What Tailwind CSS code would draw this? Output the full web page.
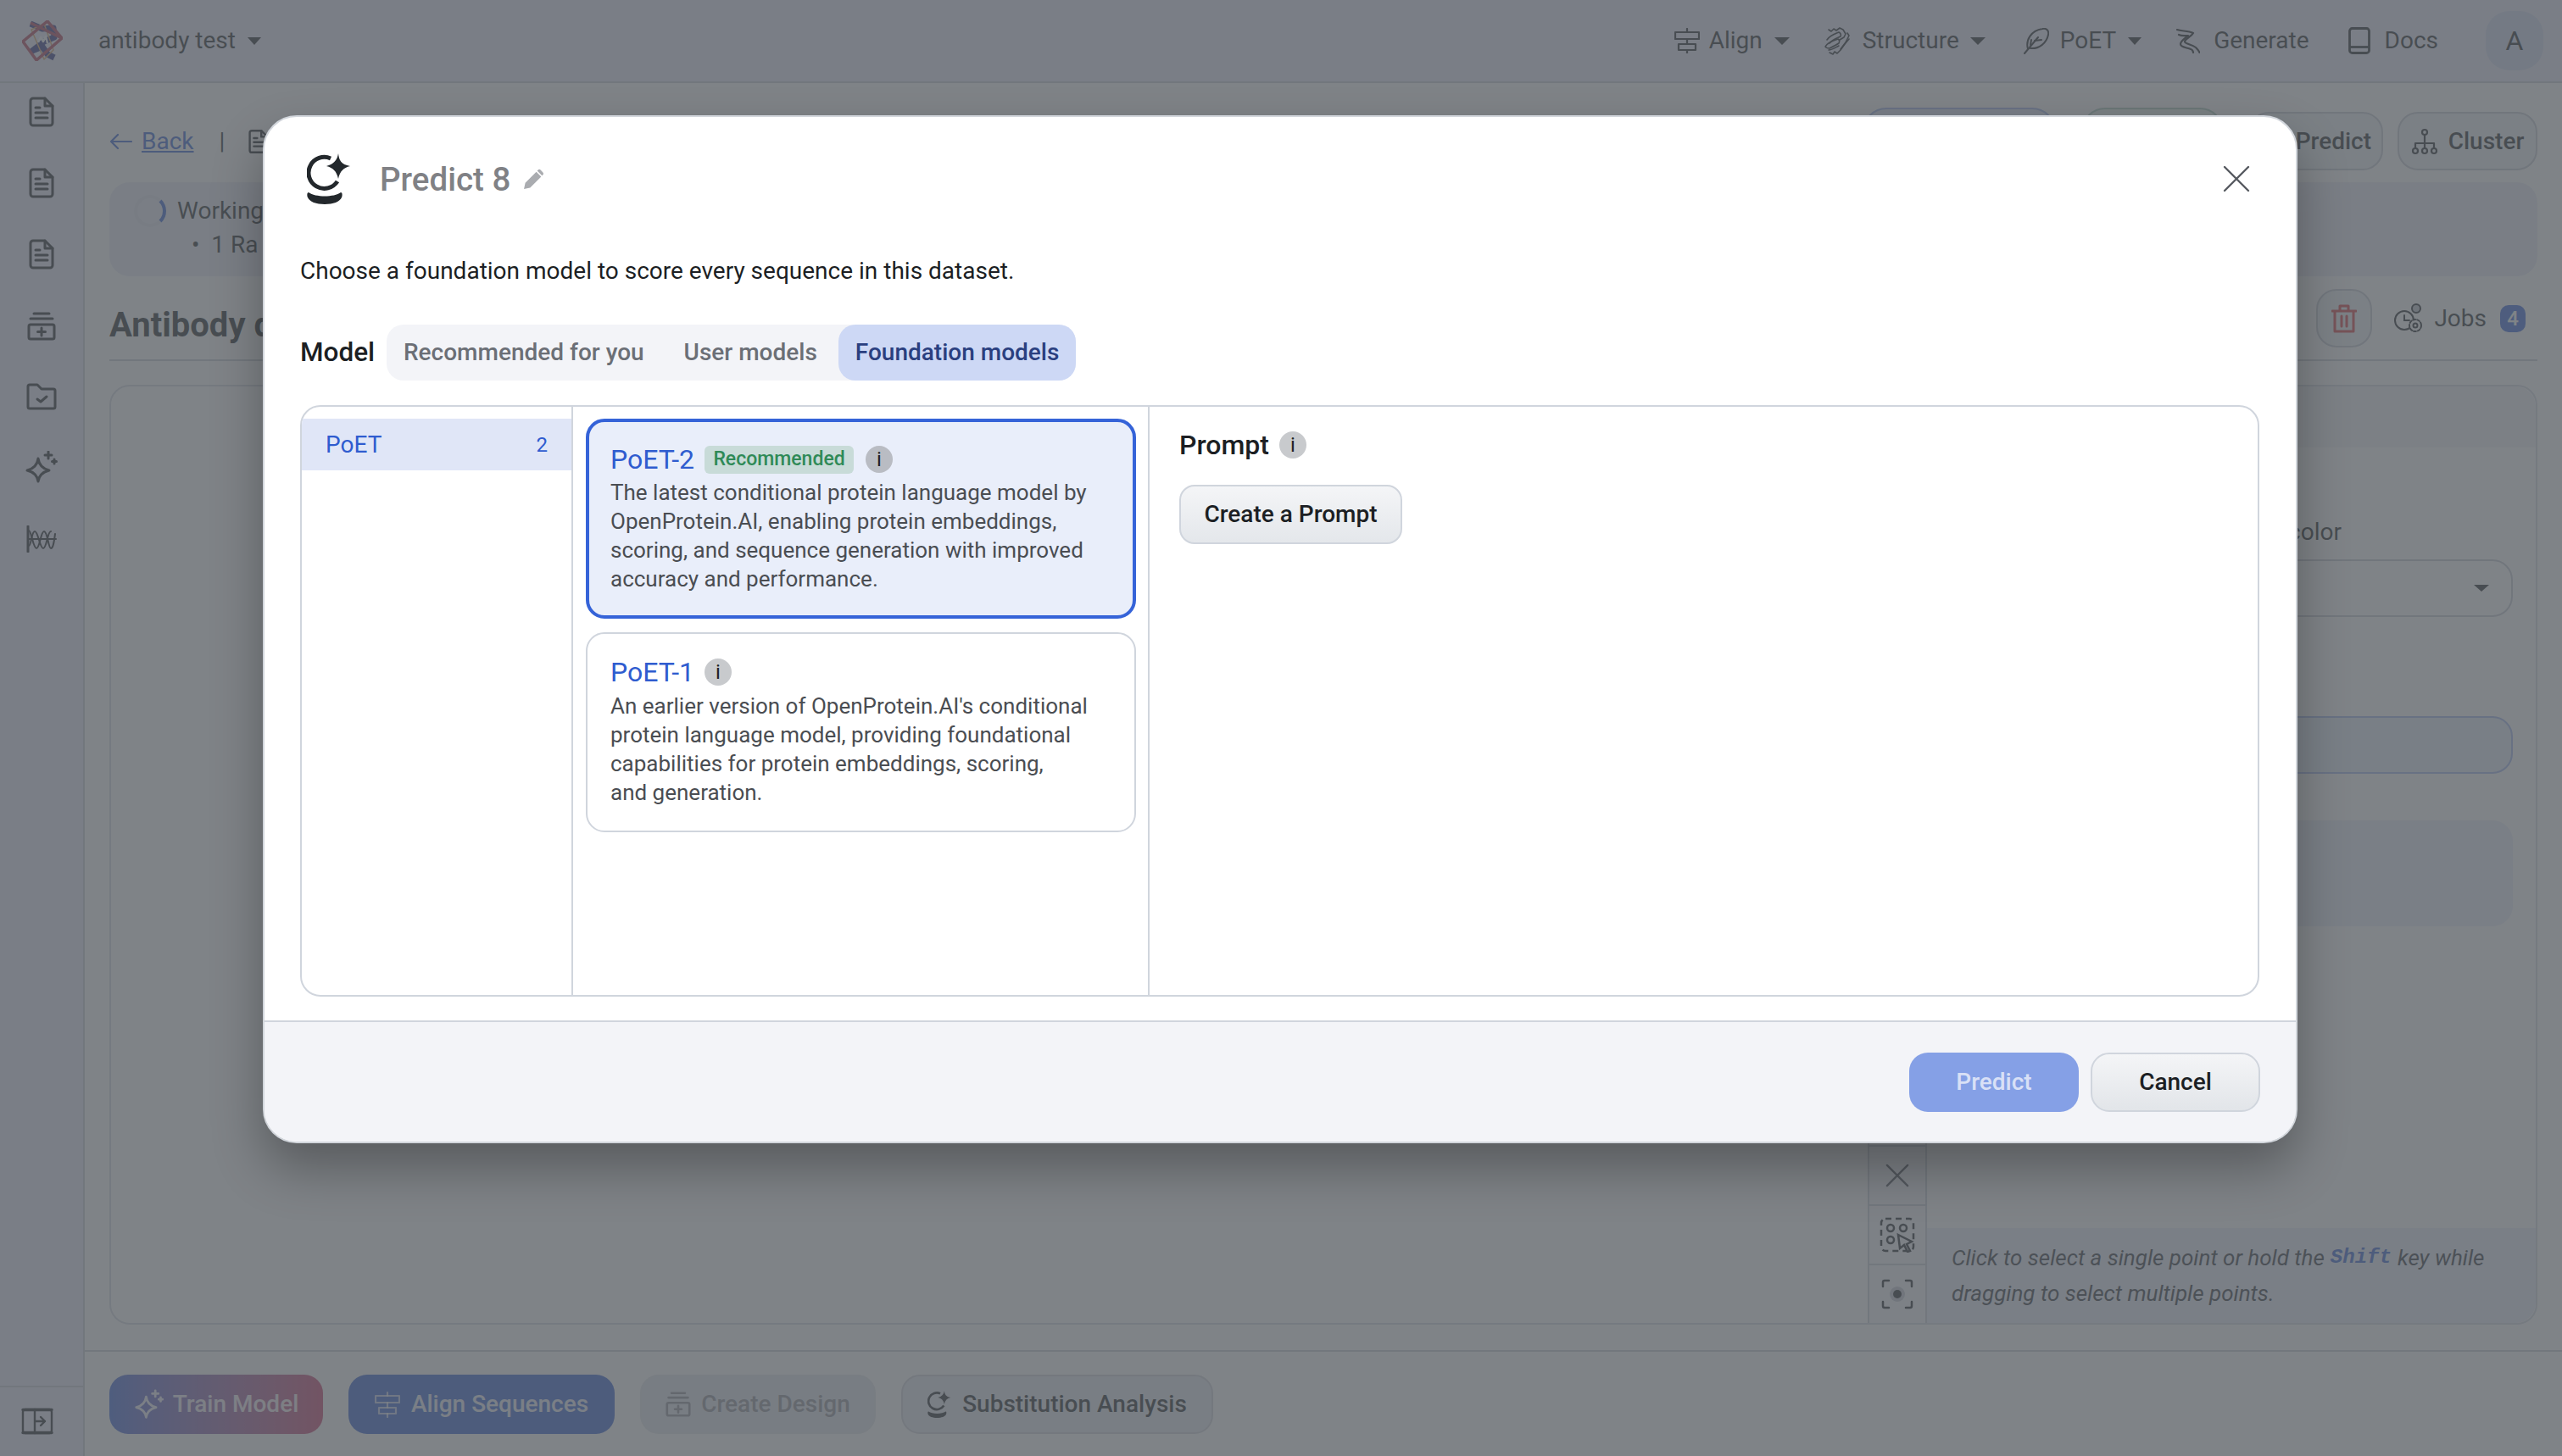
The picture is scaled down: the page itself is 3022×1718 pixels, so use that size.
<!DOCTYPE html>
<html lang="en">
<head>
  <meta charset="UTF-8" />
  <title>Predict 8</title>
  <script src="https://cdn.jsdelivr.net/npm/@tailwindcss/browser@4"></script>
</head>
<body class="relative h-[1718px] w-[3022px] overflow-hidden bg-white font-[Roboto,sans-serif] text-[#1c1f24]">
  <svg class="hidden">
    <symbol id="doc" viewBox="0 0 30 36" fill="none" stroke="currentColor" stroke-width="3" stroke-linejoin="round" stroke-linecap="round">
      <path d="M5 2h14l9 9v20a3 3 0 0 1-3 3H5a3 3 0 0 1-3-3V5a3 3 0 0 1 3-3z"/><path d="M19 2v9h9"/><path d="M8 13h5M8 19h14M8 25h14"/>
    </symbol>
    <symbol id="ball" viewBox="0 0 52 60">
      <path d="M28 6A18.500 18.500 0 1 0 36 33" fill="none" stroke="currentColor" stroke-width="5"/>
      <path d="M37 0c1 8 3 13 14 15-8 2-12 6-14 15-2-9-6-13-14-15 8-2 13-7 14-15z" fill="currentColor"/>
      <path d="M2 46c8 6 30 6 38 0 2 0 2 4 1 6-2 5-10 8-20 8S3 57 1 52c-1-2-1-6 1-6z" fill="currentColor"/>
    </symbol>
    <symbol id="alignv" viewBox="0 0 30 30" fill="none" stroke="currentColor" stroke-width="2.200" stroke-linejoin="round" stroke-linecap="round">
      <path d="M15 1v4M15 13v6M15 26v4"/><rect x="1" y="5" width="28" height="8"/><rect x="5" y="19" width="20" height="7"/>
    </symbol>
    <symbol id="sparkle" viewBox="0 0 40 38" fill="none" stroke="currentColor" stroke-width="3" stroke-linejoin="round" stroke-linecap="round">
      <path d="M16 9c1 8 5 12 13 14-8 2-12 6-13 13-1-7-5-11-13-13 8-2 12-6 13-14z"/><path d="M28 1v8M24 5h8M35 10v5M32.500 12.500h5"/>
    </symbol>
    <symbol id="box" viewBox="0 0 34 34" fill="none" stroke="currentColor" stroke-width="3" stroke-linejoin="round" stroke-linecap="round">
      <path d="M8 2h18M4 8h26"/><rect x="2" y="15" width="30" height="17" rx="2"/><path d="M17 19v9M12.500 23.500h9"/>
    </symbol>
  </svg>

  <!-- page behind the dialog -->
  <header class="flex h-[98px] items-center border-b-2 border-[#c8ccd6] bg-[#e9e9fa] pl-[26px] pr-[22px] text-[28px]">
    <svg class="w-[48px] h-[48px]" viewBox="0 0 48 48" fill="none" stroke-linejoin="round">
      <path d="M10 4 24 10 37 9 38 20 26 25 12 36 24 31 30 40 38 44" stroke="#2a3080" stroke-width="7"/>
      <path d="M19 26l3-6 3 5 3-6 2 8" stroke="#fff" stroke-width="2.500"/>
      <path d="M11 11 26 4 37 35 26 46z" stroke="#d8a060" stroke-width="1.500"/>
      <path d="M30 1 47 21 17 47 1 25zM10 3 47 21M1 25 30 1" stroke="#b03a55" stroke-width="3.500"/>
    </svg>
    <span class="ml-[42px]">antibody test</span>
    <span class="ml-[14px] h-0 w-0 border-x-[8px] border-t-[9px] border-x-transparent border-t-[#1c1f24]"></span>
    <nav class="ml-auto flex items-center">
      <svg class="w-[30px] h-[30px]"><use href="#alignv"/></svg>
      <span class="ml-[11px]">Align</span>
      <span class="ml-[14px] h-0 w-0 border-x-[9px] border-t-[9px] border-x-transparent border-t-[#1c1f24]"></span>
      <svg class="ml-[41px] w-[32px] h-[33px]" viewBox="0 0 32 33" fill="none" stroke="currentColor" stroke-width="1.600" stroke-linejoin="round" stroke-linecap="round">
        <path d="M5 3l3 2 3-3 3 2 4-3 4 2 3 5-2 4-5 3"/><path d="M3 15c3-5 9-7 14-9 2 1 3 3 2 5-4 2-10 4-13 8"/><path d="M1 23c2-4 9-7 15-9 2 1 2 3 1 5-3 2-7 4-11 6-2 0-4 0-5-2z"/><path d="M5 27c4 0 8-3 12-5M6 30l4 2 2-3 3 2 4-4 5-7 5-6"/><path d="M27 7l2 3-4 8-6 8"/>
      </svg>
      <span class="ml-[13px]">Structure</span>
      <span class="ml-[13px] h-0 w-0 border-x-[9px] border-t-[9px] border-x-transparent border-t-[#1c1f24]"></span>
      <svg class="ml-[45px] w-[30px] h-[31px]" viewBox="0 0 30 31" fill="none" stroke="currentColor" stroke-width="2" stroke-linejoin="round" stroke-linecap="round">
        <path d="M1 30 17 11"/><path d="M5 25C2 14 9 3 22 1c5-1 8 2 7 7-2 10-11 17-21 16"/><path d="M8 20l1-6M13 15l8-1"/>
      </svg>
      <span class="ml-[13px]">PoET</span>
      <span class="ml-[14px] h-0 w-0 border-x-[8px] border-t-[9px] border-x-transparent border-t-[#1c1f24]"></span>
      <svg class="ml-[41px] w-[28px] h-[29px]" viewBox="0 0 28 29" fill="none" stroke="currentColor" stroke-width="2.200" stroke-linejoin="round" stroke-linecap="round">
        <path d="M1 1c5 2 13 1 19 4-2 4-9 6-10 10 0 3 8 3 13 7 2 2 4 4 5 7"/><path d="M3 7c4 2 9 1 11 1-3 3-9 6-9 10 0 4 8 4 12 6 1 0 3 2 3 4"/>
      </svg>
      <span class="ml-[16px]">Generate</span>
      <svg class="ml-[46px] w-[26px] h-[32px]" viewBox="0 0 26 32" fill="none" stroke="currentColor" stroke-width="2.800" stroke-linejoin="round">
        <rect x="1.500" y="1.500" width="23" height="29" rx="3"/><path d="M1.500 23.500h23"/>
      </svg>
      <span class="ml-[17px]">Docs</span>
      <span class="ml-[56px] flex h-[70px] w-[68px] items-center justify-center rounded-[28px] bg-[#d0d8f0] text-[32px]">A</span>
    </nav>
  </header>

  <div class="flex h-[1620px]">
    <aside class="flex w-[100px] shrink-0 flex-col items-center border-r-2 border-[#c8ccd6] bg-[#e9e9fa]">
      <svg class="mt-[16px] w-[30px] h-[36px]"><use href="#doc"/></svg>
      <svg class="mt-[48px] w-[30px] h-[36px]"><use href="#doc"/></svg>
      <svg class="mt-[48px] w-[30px] h-[36px]"><use href="#doc"/></svg>
      <svg class="mt-[50px] w-[34px] h-[34px]"><use href="#box"/></svg>
      <svg class="mt-[50px] w-[36px] h-[32px]" viewBox="0 0 36 32" fill="none" stroke="currentColor" stroke-width="3" stroke-linejoin="round" stroke-linecap="round">
        <path d="M2 4a2 2 0 0 1 2-2h9l5 5h14a2 2 0 0 1 2 2v19a2 2 0 0 1-2 2H4a2 2 0 0 1-2-2z"/><path d="M13 19l4 3 7-6"/>
      </svg>
      <svg class="mt-[48px] w-[40px] h-[38px]"><use href="#sparkle"/></svg>
      <svg class="mt-[50px] w-[36px] h-[32px]" viewBox="0 0 36 32" fill="none" stroke="currentColor" stroke-width="2" stroke-linecap="round">
        <path d="M2 1v30" stroke-width="3"/><path d="M2 16h33"/><path d="M3 6c3 0 5 21 9 21s5-20 9-20 5 20 8 20 4-10 5-17"/><path d="M3 24c3 0 3-17 7-17s6 20 10 20 5-20 9-20"/>
      </svg>
      <div class="mt-auto flex h-[83px] w-full justify-center border-t-2 border-[#c8ccd6] pr-[10px] pt-[24px]">
        <svg class="w-[38px] h-[32px]" viewBox="0 0 38 32" fill="none" stroke="currentColor" stroke-width="2.400" stroke-linejoin="round" stroke-linecap="round">
          <rect x="2" y="2" width="34" height="28" rx="3"/><path d="M2 2.500h34M2 29.500h34" stroke-width="3.500"/><path d="M16 2v28M16 16h12M23 11l5 5-5 5"/>
        </svg>
      </div>
    </aside>

    <main class="flex min-w-0 flex-1 flex-col">
      <section class="flex h-[1495px] flex-col px-[29px] pb-[30px]">
        <div class="mt-[34px] flex h-[69px] items-center text-[28px]">
          <svg class="w-[27px] h-[20px] text-[#2f5ccf]" viewBox="0 0 27 20" fill="none" stroke="currentColor" stroke-width="2.200" stroke-linecap="round" stroke-linejoin="round"><path d="M26 10H2M10 2 2 10l8 8"/></svg>
          <a class="ml-[11px] text-[#2f5ccf] underline">Back</a>
          <span class="ml-[30px]">|</span>
          <svg class="ml-[28px] w-[24px] h-[30px]"><use href="#doc"/></svg>
          <div class="ml-auto flex items-center">
            <span class="-mt-[5px] h-[74px] w-[228px] rounded-[28px] border-2 border-[#9db2ec] bg-[#dfe6fa]"></span>
            <span class="-mt-[5px] ml-[30px] h-[74px] w-[168px] rounded-[28px] border-2 border-[#a9c9bb] bg-[#e4efea]"></span>
            <span class="ml-[29px] flex h-[69px] w-[159px] items-center justify-end rounded-[24px] border-2 border-[#c4c8d2] bg-[#eef0f6] pr-[12px] font-medium">Predict</span>
            <span class="ml-[17px] flex h-[69px] w-[165px] items-center justify-center gap-[12px] rounded-[24px] border-2 border-[#c4c8d2] bg-[#eef0f6] font-medium">
              <svg class="w-[32px] h-[32px]" viewBox="0 0 32 32" fill="none" stroke="currentColor" stroke-width="2.200" stroke-linejoin="round">
                <circle cx="16" cy="5" r="3"/><path d="M16 8v8M5 24v-6h22v6M16 16v8"/><circle cx="5" cy="27" r="3"/><circle cx="16" cy="27" r="3"/><circle cx="27" cy="27" r="3"/>
              </svg>
              Cluster
            </span>
          </div>
        </div>

        <div class="mt-[14px] h-[111px] rounded-[24px] bg-[#e9ebf6] pl-[29px] pt-[14px] text-[28px]">
          <div class="flex h-[40px] items-center">
            <span class="h-[38px] w-[38px] rounded-full border-[4px] border-[#dfe3ee] border-r-[#2f5ccf]"></span>
            <span class="ml-[13px]">Working</span>
          </div>
          <div class="flex h-[40px] items-center pl-[68px]">• &nbsp;1 Ra</div>
        </div>

        <div class="mt-[15px] flex h-[85px] shrink-0 items-start border-b-2 border-[#c8ccd6] pb-[15px]">
          <div class="flex h-[69px] items-center whitespace-nowrap pt-[16px] text-[40px] font-bold">Antibody d</div>
          <div class="ml-auto flex h-[69px] items-center">
            <span class="flex h-[69px] w-[66px] items-center justify-center rounded-[24px] border-2 border-[#c4c8d2] bg-[#eef0f6] text-[#d8383c]">
              <svg class="w-[30px] h-[34px]" viewBox="0 0 30 34" fill="none" stroke="currentColor" stroke-width="3" stroke-linejoin="round" stroke-linecap="round">
                <path d="M1 8h28M10 8V2h10v6M4 8v24h22V8M12 14v12M18 14v12"/>
              </svg>
            </span>
            <svg class="ml-[25px] w-[36px] h-[36px]" viewBox="0 0 36 36" fill="none" stroke="currentColor" stroke-width="2" stroke-linecap="round">
              <circle cx="13" cy="20" r="11"/><path d="M13 14v6h6"/><circle cx="27" cy="6" r="5" fill="#bcc0c8"/><circle cx="26" cy="26" r="7" fill="#fff" stroke-dasharray="3 2"/><circle cx="26" cy="26" r="2.500"/>
            </svg>
            <span class="ml-[12px] text-[28px]">Jobs</span>
            <span class="ml-[16px] mr-[14px] flex h-[32px] w-[30px] items-center justify-center rounded-[10px] bg-[#3563d8] text-[24px] font-medium text-white">4</span>
          </div>
        </div>

        <div class="mt-[28px] flex min-h-0 flex-1 rounded-[24px] border-2 border-[#d6d9e2]">
          <div class="flex-1"></div>
          <div class="flex w-[70px] flex-col justify-end border-x-2 border-[#c8ccd6] bg-[#f4f5fb]">
            <div class="flex h-[70px] items-center justify-center border-t-2 border-[#c8ccd6] text-[#4a4e55]">
              <svg class="w-[28px] h-[30px]" viewBox="0 0 30 30" stroke="currentColor" stroke-width="2.500" stroke-linecap="round"><path d="M2 2l26 26M28 2 2 28"/></svg>
            </div>
            <div class="flex h-[70px] items-center justify-center border-t-2 border-[#c8ccd6]">
              <svg class="w-[42px] h-[42px]" viewBox="0 0 42 42" fill="none" stroke="currentColor" stroke-width="2.500">
                <rect x="2" y="2" width="38" height="38" rx="5" stroke-dasharray="7 5"/><circle cx="13" cy="13" r="4"/><circle cx="28" cy="13" r="4"/><circle cx="13" cy="27" r="4"/><path d="M22 21l16 8-6 3 4 8-3 1-4-8-5 4z" fill="#f4f5fb"/>
              </svg>
            </div>
            <div class="flex h-[70px] items-center justify-center border-t-2 border-[#c8ccd6]">
              <svg class="w-[38px] h-[36px]" viewBox="0 0 38 36" fill="none" stroke="currentColor" stroke-width="2.500" stroke-linecap="round">
                <path d="M2 9V4a2 2 0 0 1 2-2h5M29 2h5a2 2 0 0 1 2 2v5M36 27v5a2 2 0 0 1-2 2h-5M9 34H4a2 2 0 0 1-2-2v-5"/><circle cx="19" cy="18" r="9" fill="#c3c6d0" stroke="none"/><circle cx="19" cy="18" r="5" fill="currentColor" stroke="none"/>
              </svg>
            </div>
          </div>
          <div class="flex w-[718px] flex-col">
            <div class="h-[72px] shrink-0 rounded-tr-[24px] bg-[#f0f1f6]"></div>
            <div class="mt-[79px] pr-[229px] text-right text-[28px]">color</div>
            <div class="ml-[29px] mr-[27px] mt-[11px] flex h-[68px] items-center justify-end rounded-[24px] border-2 border-[#c4c8d2] pr-[26px]">
              <span class="h-0 w-0 border-x-[9px] border-t-[8px] border-x-transparent border-t-[#1c1f24]"></span>
            </div>
            <div class="ml-[29px] mr-[27px] mt-[117px] h-[68px] rounded-[24px] border-2 border-[#9db2ec] bg-[#e7ecf9]"></div>
            <div class="ml-[29px] mr-[27px] mt-[55px] h-[125px] rounded-[24px] bg-[#eaecf8]"></div>
            <div class="mt-auto h-[112px] rounded-br-[24px] bg-[#eaecf8] px-[29px] py-[14px] text-[26px] italic leading-[42px] text-[#2c3036]">
              <p class="flex gap-[7px] whitespace-nowrap"><span>Click to select a single point or hold the</span><span class="font-['Liberation_Mono'] text-[24px] font-bold text-[#2f5ccf]">Shift</span><span>key while</span></p>
              <p>dragging to select multiple points.</p>
            </div>
          </div>
        </div>
      </section>

      <div class="flex h-[125px] items-start gap-[30px] border-t-2 border-[#c8ccd6] px-[29px] pt-[27px] text-[28px] font-medium">
        <span class="flex h-[70px] w-[252px] items-center justify-center gap-[10px] rounded-[22px] bg-gradient-to-r from-[#3563d8] to-[#c93a6a] text-white/90">
          <svg class="w-[36px] h-[36px]"><use href="#sparkle"/></svg>
          Train Model
        </span>
        <span class="flex h-[70px] w-[314px] items-center justify-center gap-[13px] rounded-[22px] bg-[#2f5ccf] text-white/90">
          <svg class="w-[30px] h-[32px] text-white/70"><use href="#alignv"/></svg>
          Align Sequences
        </span>
        <span class="flex h-[70px] w-[278px] items-center justify-center gap-[12px] rounded-[22px] border-2 border-[#e2e4ea] bg-[#e2e4ee] text-[#8e9098]">
          <svg class="w-[30px] h-[34px]"><use href="#box"/></svg>
          Create Design
        </span>
        <span class="flex h-[70px] w-[368px] items-center justify-center gap-[13px] rounded-[22px] border-2 border-[#cfd2da] bg-[#e6e8f0]">
          <svg class="w-[28px] h-[32px]"><use href="#ball"/></svg>
          Substitution Analysis
        </span>
      </div>
    </main>
  </div>

  <div class="absolute inset-0 bg-[#575c61]/76"></div>

  <!-- Predict dialog -->
  <div class="absolute left-[310px] top-[136px] flex h-[1213px] w-[2400px] flex-col overflow-hidden rounded-[40px] border-2 border-[#d2d6dc] bg-white shadow-[0_30px_60px_rgba(0,0,0,0.3)]">
    <div class="mt-[40px] flex h-[66px] shrink-0 items-center pl-[50px] pr-[54px]">
      <svg class="w-[52px] h-[60px] text-[#23282c]"><use href="#ball"/></svg>
      <span class="ml-[34px] pt-[1px] text-[38.500px] font-medium text-[#808185]">Predict 8</span>
      <svg class="ml-[15px] w-[25px] h-[25px] text-[#aaacb0]" viewBox="0 0 24 24" fill="currentColor"><path d="M1 23l1.500-7L15 3.500 20.500 9 8 21.500zM17 1.500a2 2 0 0 1 2.800 0l2.700 2.700a2 2 0 0 1 0 2.800L21.500 8 16 2.500z"/></svg>
      <svg class="ml-auto w-[32px] h-[32px] text-[#55595f]" viewBox="0 0 32 32" stroke="currentColor" stroke-width="2.400" stroke-linecap="round"><path d="M2 2l28 28M30 2 2 30"/></svg>
    </div>

    <p class="mt-[56px] h-[40px] shrink-0 pl-[42px] text-[28px] leading-[40px] text-[#1c1f24]">Choose a foundation model to score every sequence in this dataset.</p>

    <div class="mt-[43px] flex h-[66px] shrink-0 items-center pl-[42px]">
      <span class="w-[87px] text-[31.500px] font-medium">Model</span>
      <div class="ml-[15px] flex h-[66px] items-center rounded-[20px] bg-[#f3f4f8] text-[28px] font-medium text-[#6b6f76]">
        <span class="px-[20px]">Recommended for you</span>
        <span class="pl-[27px] pr-[25px]">User models</span>
        <span class="flex h-[66px] items-center rounded-[20px] bg-[#cdd8f5] px-[20px] text-[#2a3f7f]">Foundation models</span>
      </div>
    </div>

    <div class="ml-[42px] mr-[43px] mt-[29px] flex h-[698px] shrink-0 overflow-hidden rounded-[24px] border-2 border-[#d0d5dd]">
      <div class="w-[320px] shrink-0 border-r-2 border-[#d0d5dd] pt-[14px]">
        <div class="flex h-[61px] items-center justify-between bg-[#e0e6f7] pl-[28px] pr-[28px] text-[#2f5ccf]">
          <span class="text-[28px]">PoET</span>
          <span class="text-[24px]">2</span>
        </div>
      </div>

      <div class="w-[680px] shrink-0 border-r-2 border-[#d0d5dd] pl-[15px] pr-[14px] pt-[14px]">
        <div class="h-[236px] rounded-[22px] border-4 border-[#3563d8] bg-[#e9eefa] px-[25px] pt-[22px]">
          <div class="flex h-[44px] items-center">
            <span class="text-[32px] text-[#2f5ccf]">PoET-2</span>
            <span class="ml-[12px] flex h-[33px] w-[176px] items-center justify-center rounded-[6px] bg-[#c8dbd8] text-[23px] font-medium text-[#2f8a57]">Recommended</span>
            <span class="ml-[14px] flex h-[32px] w-[32px] items-center justify-center rounded-full bg-[#b9bcc3] text-[24px]">i</span>
          </div>
          <p class="text-[26px] leading-[34px] text-[#4a4d52]">The latest conditional protein language model by<br>OpenProtein.AI, enabling protein embeddings,<br>scoring, and sequence generation with improved<br>accuracy and performance.</p>
        </div>
        <div class="mt-[16px] h-[236px] rounded-[22px] border-2 border-[#d0d5dd] bg-white px-[27px] pt-[23px]">
          <div class="flex h-[44px] items-center">
            <span class="text-[32px] text-[#2f5ccf]">PoET-1</span>
            <span class="ml-[12px] flex h-[32px] w-[32px] items-center justify-center rounded-full bg-[#c8cacd] text-[24px]">i</span>
          </div>
          <p class="mt-[1px] text-[26px] leading-[34px] text-[#4a4d52]">An earlier version of OpenProtein.AI's conditional<br>protein language model, providing foundational<br>capabilities for protein embeddings, scoring,<br>and generation.</p>
        </div>
      </div>

      <div class="flex-1 pl-[35px] pt-[25px]">
        <div class="flex h-[40px] items-center">
          <span class="text-[32px] font-medium">Prompt</span>
          <span class="ml-[12px] flex h-[32px] w-[32px] items-center justify-center rounded-full bg-[#c8cacd] text-[24px]">i</span>
        </div>
        <div class="mt-[27px] flex h-[70px] w-[263px] items-center justify-center rounded-[18px] border-2 border-[#d0d5dd] bg-gradient-to-b from-[#f4f5f7] to-[#e4e7eb] text-[28px] font-medium">Create a Prompt</div>
      </div>
    </div>

    <div class="mt-[28px] flex flex-1 items-start justify-end gap-[14px] border-t-2 border-[#d0d5dd] bg-[#f3f4f8] pr-[42px] pt-[36px] text-[28px] font-medium">
      <span class="flex h-[70px] w-[200px] items-center justify-center rounded-[22px] bg-[#85a0e6] text-[#d9e0f6]">Predict</span>
      <span class="flex h-[70px] w-[200px] items-center justify-center rounded-[22px] border-2 border-[#d0d5dd] bg-gradient-to-b from-[#f4f5f7] to-[#e2e5e9]">Cancel</span>
    </div>
  </div>
</body>
</html>
